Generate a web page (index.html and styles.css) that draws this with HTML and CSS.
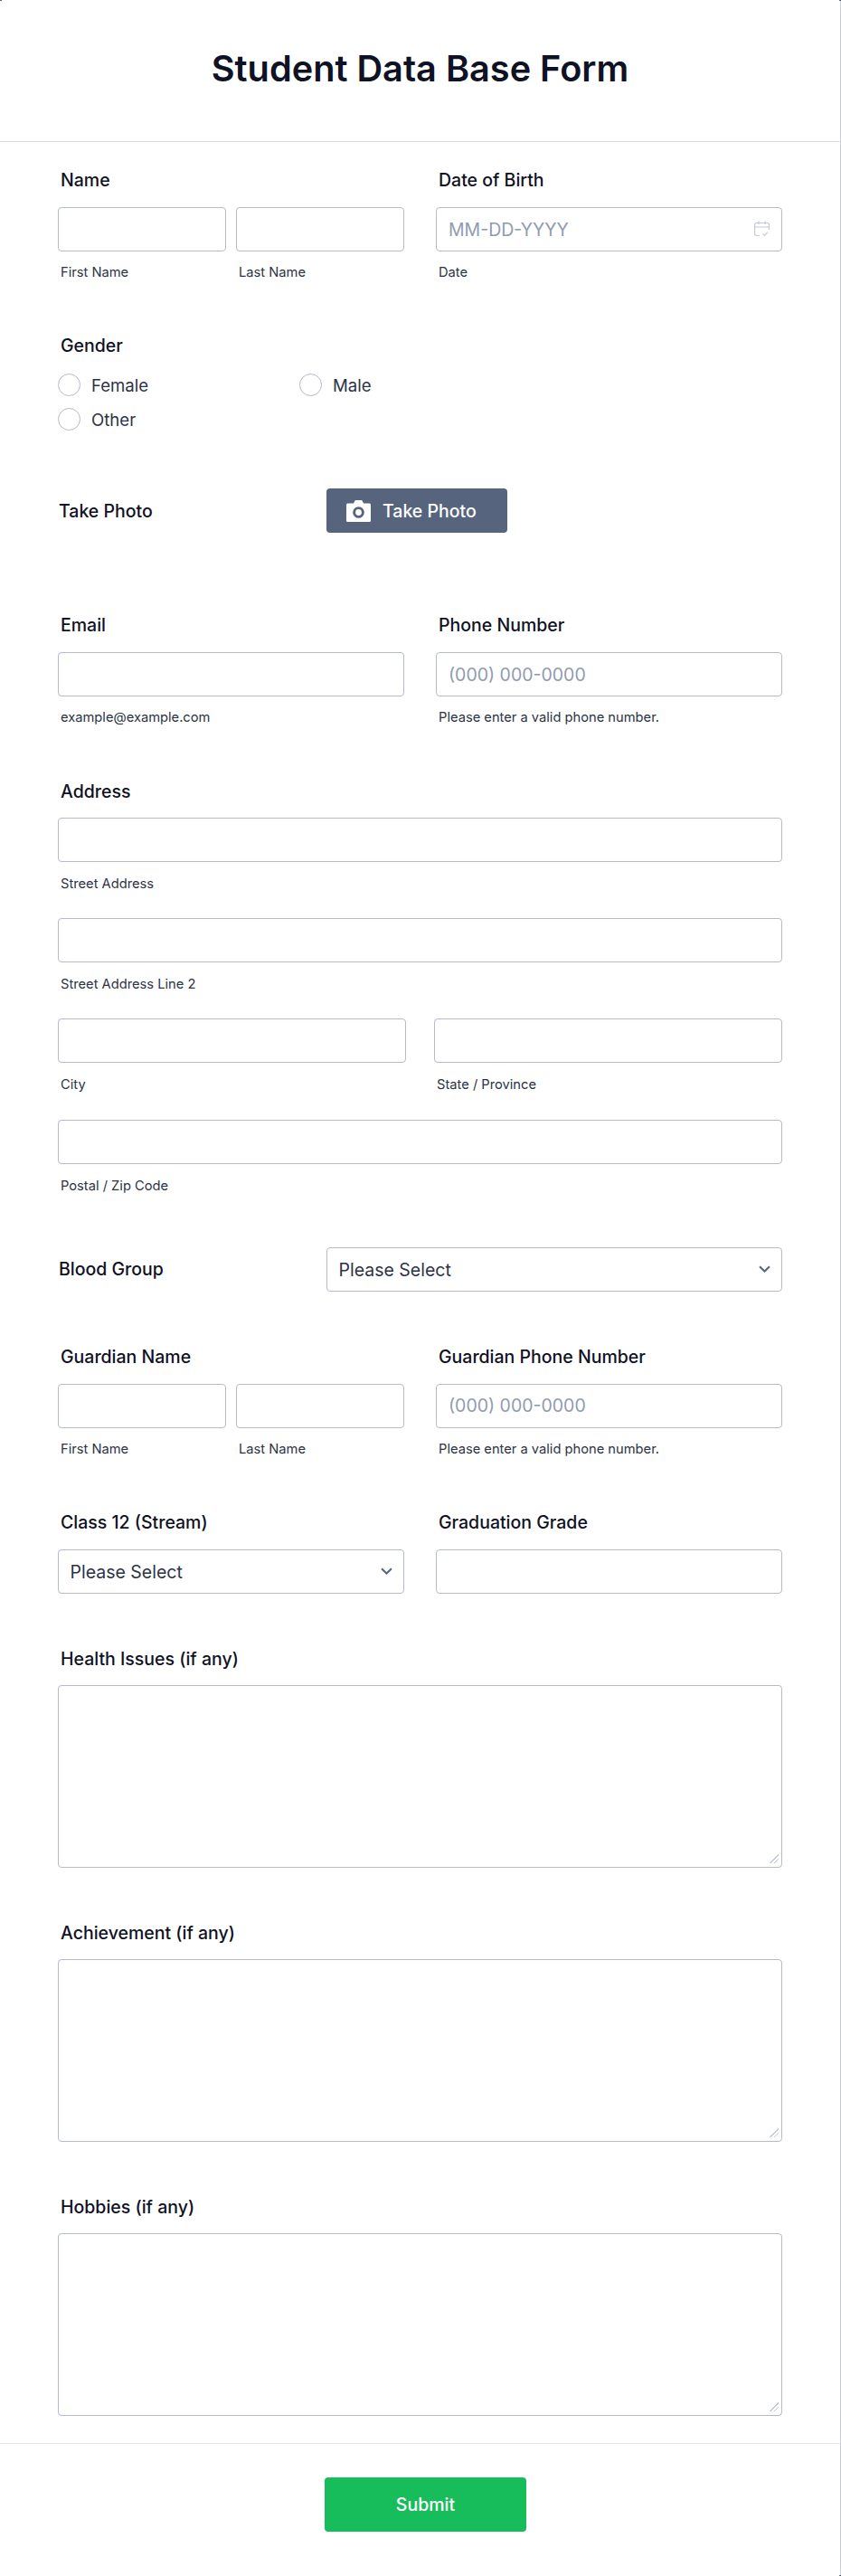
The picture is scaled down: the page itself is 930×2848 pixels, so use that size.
FILE: index.html
```html
<!DOCTYPE html>
<html lang="en">
<head>
<meta charset="utf-8">
<title>Student Data Base Form</title>
<link rel="stylesheet" href="styles.css">
</head>
<body>
<form class="card">
  <header class="head"><h1>Student Data Base Form</h1></header>
  <main class="body">
    <div class="split row-name">
      <div class="field">
        <label class="label">Name</label>
        <div class="pair">
          <div><input class="input" type="text"><span class="sub">First Name</span></div>
          <div><input class="input" type="text"><span class="sub">Last Name</span></div>
        </div>
      </div>
      <div class="field">
        <label class="label">Date of Birth</label>
        <div class="with-icon">
          <input class="input" type="text" placeholder="MM-DD-YYYY">
          <svg class="cal" viewBox="0 0 17 18" fill="none" stroke="#c3c8da" stroke-width="1.200"><path d="M5 .5v3.500M12 .5v3.500M.6 7h15.800M6 16.500H2.500A1.900 1.900 0 0 1 .6 14.600V4.400A1.900 1.900 0 0 1 2.500 2.500h12a1.900 1.900 0 0 1 1.900 1.900V10"/><path d="M9.500 14.600l1.800 1.900 3.700-3.900"/></svg>
        </div>
        <span class="sub">Date</span>
      </div>
    </div>

    <fieldset class="gender">
      <legend class="label">Gender</legend>
      <div class="radios">
        <label class="radio"><input type="radio" name="g"><span>Female</span></label>
        <label class="radio"><input type="radio" name="g"><span>Male</span></label>
        <label class="radio"><input type="radio" name="g"><span>Other</span></label>
      </div>
    </fieldset>

    <div class="inline row-photo">
      <span class="label side">Take Photo</span>
      <button type="button" class="photo">
        <svg viewBox="0 0 27 24" fill="#fff"><path fill-rule="evenodd" d="M1.500 3.500H8L9.200.9A1.500 1.500 0 0 1 10.600 0h5.800a1.500 1.500 0 0 1 1.400.9L19 3.500h6.500A1.500 1.500 0 0 1 27 5v17.500a1.500 1.500 0 0 1-1.500 1.500h-24A1.500 1.500 0 0 1 0 22.500V5a1.500 1.500 0 0 1 1.500-1.500zM13.500 7.200a6.300 6.300 0 1 0 0 12.600 6.300 6.300 0 0 0 0-12.600zm0 2.900a3.400 3.400 0 1 1 0 6.800 3.400 3.400 0 0 1 0-6.800z"/></svg>
        <span>Take Photo</span>
      </button>
    </div>

    <div class="split row-email">
      <div class="field">
        <label class="label">Email</label>
        <input class="input" type="email">
        <span class="sub">example@example.com</span>
      </div>
      <div class="field">
        <label class="label">Phone Number</label>
        <input class="input" type="tel" placeholder="(000) 000-0000">
        <span class="sub">Please enter a valid phone number.</span>
      </div>
    </div>

    <div class="address">
      <label class="label">Address</label>
      <div class="addr-line"><input class="input" type="text"><span class="sub">Street Address</span></div>
      <div class="addr-line"><input class="input" type="text"><span class="sub">Street Address Line 2</span></div>
      <div class="addr-line addr-pair">
        <div><input class="input" type="text"><span class="sub">City</span></div>
        <div><input class="input" type="text"><span class="sub">State / Province</span></div>
      </div>
      <div class="addr-line"><input class="input" type="text"><span class="sub">Postal / Zip Code</span></div>
    </div>

    <div class="inline row-blood">
      <span class="label side">Blood Group</span>
      <div class="select-wrap grow">
        <select class="select"><option>Please Select</option></select>
        <svg class="chev" viewBox="0 0 13 8" fill="none" stroke="#57647e" stroke-width="2"><path d="M1 1.200l5.500 5.300L12 1.200"/></svg>
      </div>
    </div>

    <div class="split row-guardian">
      <div class="field">
        <label class="label">Guardian Name</label>
        <div class="pair">
          <div><input class="input" type="text"><span class="sub">First Name</span></div>
          <div><input class="input" type="text"><span class="sub">Last Name</span></div>
        </div>
      </div>
      <div class="field">
        <label class="label">Guardian Phone Number</label>
        <input class="input" type="tel" placeholder="(000) 000-0000">
        <span class="sub">Please enter a valid phone number.</span>
      </div>
    </div>

    <div class="split row-class">
      <div class="field">
        <label class="label">Class 12 (Stream)</label>
        <div class="select-wrap">
          <select class="select"><option>Please Select</option></select>
          <svg class="chev" viewBox="0 0 13 8" fill="none" stroke="#57647e" stroke-width="2"><path d="M1 1.200l5.500 5.300L12 1.200"/></svg>
        </div>
      </div>
      <div class="field">
        <label class="label">Graduation Grade</label>
        <input class="input" type="text">
      </div>
    </div>

    <div class="long">
      <label class="label">Health Issues (if any)</label>
      <textarea class="area"></textarea>
    </div>
    <div class="long">
      <label class="label">Achievement (if any)</label>
      <textarea class="area"></textarea>
    </div>
    <div class="long">
      <label class="label">Hobbies (if any)</label>
      <textarea class="area"></textarea>
    </div>
  </main>
  <footer class="foot"><button type="button" class="submit">Submit</button></footer>
</form>
</body>
</html>
```

FILE: styles.css
```css
* { box-sizing: border-box; }
html, body { margin: 0; padding: 0; background: #fff; }
body { font-family: Inter, "Liberation Sans", sans-serif; color: #0a1551; }
.card {
  position: relative;
  width: 930px;
  height: 2848px;
  display: flex;
  flex-direction: column;
  background: #fff;
  border-right: 1px solid #c9ccdb;
}
.card::before, .card::after {
  content: "";
  position: absolute;
  top: 0;
  width: 2px;
  height: 1px;
  background: #57647e;
}
.card::before { left: 0; }
.card::after { right: -1px; }
.head {
  height: 157px;
  flex: none;
  border-bottom: 1px solid #d8dae9;
  display: flex;
  align-items: center;
  justify-content: center;
  padding-bottom: 4px;
}
h1 {
  margin: 0;
  font-size: 39.7px;
  line-height: 48px;
  font-weight: 600;
  color: #0f1124;
}
.body { padding: 30px 64px 0; flex: none; height: 2544px; }
.label {
  display: block;
  height: 24px;
  line-height: 24px;
  font-size: 19.5px;
  font-weight: 500;
  color: #0f1124;
  margin: 0 0 18px 3px;
  padding: 0;
}
.address .label, .long .label { padding-top: 1px; }
.sub {
  display: block;
  height: 18px;
  line-height: 18px;
  font-size: 14.7px;
  color: #2c3345;
  margin: 14px 0 0 3px;
}
.addr-line .sub { padding-top: 1px; }
.input, .select {
  display: block;
  width: 100%;
  height: 49px;
  padding: 0 13px;
  border: 1px solid #b5bacd;
  border-radius: 4px;
  background: #fff;
  font: 400 19.5px Inter, "Liberation Sans", sans-serif;
  color: #2c3345;
  outline: none;
}
.input::placeholder { color: #8f9bb1; opacity: 1; }
.split { display: grid; grid-template-columns: 383px 383px; column-gap: 35px; }
.pair { display: grid; grid-template-columns: 186px 186px; column-gap: 11px; }
.with-icon { position: relative; }
.cal { position: absolute; right: 14px; top: 15px; width: 17px; height: 18px; }
.gender { border: 0; margin: 60px 0 0; padding: 0; }
.gender .label { margin-bottom: 19px; }
.radios { display: grid; grid-template-columns: 267px 267px; row-gap: 13px; }
.radio { display: flex; align-items: center; gap: 12px; height: 25px; font-size: 18.6px; color: #2c3345; }
.radio input {
  appearance: none;
  width: 25px;
  height: 25px;
  margin: 0;
  border: 1px solid #b5bacd;
  border-radius: 50%;
  background: #fff;
}
.inline { display: flex; align-items: center; }
.side { margin: 0 0 0 1px; width: 296px; flex: none; }
.row-photo { margin-top: 64px; }
.photo {
  width: 200px;
  height: 49px;
  display: flex;
  align-items: center;
  gap: 13px;
  padding: 0 0 0 22px;
  border: 0;
  border-radius: 4px;
  background: #57647e;
  color: #fff;
  font: 500 19.5px Inter, "Liberation Sans", sans-serif;
}
.photo svg { width: 27px; height: 24px; flex: none; }
.row-email { margin-top: 90px; }
.address { margin-top: 60px; }
.addr-line { margin-bottom: 30.2px; }
.addr-pair { display: grid; grid-template-columns: 385px 385px; column-gap: 31px; }
.row-blood { margin-top: 60.4px; }
.grow { flex: 1; }
.select-wrap { position: relative; }
.select { appearance: none; padding: 2px 13px 0 12.5px; }
.chev { position: absolute; right: 13px; top: 20px; width: 13px; height: 8px; pointer-events: none; }
.row-guardian { margin-top: 60px; }
.row-class { margin-top: 60px; }
.long { margin-top: 59px; }
.area {
  display: block;
  width: 100%;
  height: 202px;
  padding: 12px;
  border: 1px solid #b5bacd;
  border-radius: 4px;
  background: #fff;
  outline: none;
}
.area::-webkit-resizer {
  background: linear-gradient(135deg, transparent 0 7px, #c3c8da 7px 8px, transparent 8px 10px, #c3c8da 10px 11px, transparent 11px) 2px 1px / 10px 10px no-repeat;
}
.foot {
  position: relative;
  flex: 1;
  border-top: 1px solid #e3e5f0;
  padding: 37px 0 0 359px;
}
.foot::after {
  content: "";
  position: absolute;
  right: -1px;
  bottom: 0;
  width: 2px;
  height: 1px;
  background: #57647e;
}
.submit {
  display: block;
  width: 223px;
  height: 60px;
  border: 0;
  border-radius: 4px;
  background: #18bd5b;
  color: #fff;
  font: 500 19.5px Inter, "Liberation Sans", sans-serif;
}
```
